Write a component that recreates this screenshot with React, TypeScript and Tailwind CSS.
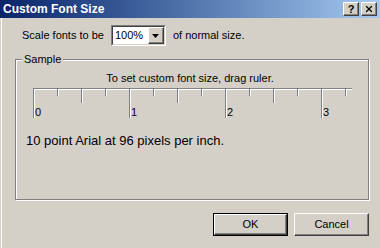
import { X } from 'lucide-react';

const raised = 'border border-t-white border-l-white border-r-[#404040] border-b-[#404040] shadow-[inset_-1px_-1px_0_#808080]';

const TitleButton = ({ children }: { children: React.ReactNode }) => (
    <div className={`w-[16px] h-[14px] bg-[#d4d0c8] flex items-center justify-center ${raised}`}>
        {children}
    </div>
);

const Ruler = () => {
    const majors = [17, 113, 209, 305];
    const halves = [65, 161, 257];
    const quarters = [41, 89, 137, 185, 233, 281, 329];
    const tick = (x: number, len: number) => (
        <g key={`${x}-${len}`}>
            <line x1={x + 0.5} y1={0} x2={x + 0.5} y2={len} stroke="#808080" />
            <line x1={x + 1.5} y1={2} x2={x + 1.5} y2={len} stroke="#ffffff" />
        </g>
    );
    return (
        <svg width="352" height="32" shapeRendering="crispEdges" className="block">
            <line x1={17} y1={0.5} x2={336} y2={0.5} stroke="#808080" />
            <line x1={18} y1={1.5} x2={336} y2={1.5} stroke="#ffffff" />
            {majors.map((x) => tick(x, 30))}
            {halves.map((x) => tick(x, 15))}
            {quarters.map((x) => tick(x, 8))}
            {majors.map((x, i) => (
                <text key={i} x={x + 2} y={28} fontSize="11" fontFamily="Liberation Sans, sans-serif" fill="#000">
                    {i}
                </text>
            ))}
        </svg>
    );
};

export default function App() {
    return (
        <div className="w-[380px] h-[248px] bg-[#d4d0c8] flex flex-col overflow-hidden text-black font-['Liberation_Sans',sans-serif] text-[11px] leading-[13px]">
            {/* Title bar */}
            <div className="h-[18px] shrink-0 flex items-center pl-[3px] pr-[3px] bg-gradient-to-r from-[#0a246a] to-[#a6caf0]">
                <span className="font-bold text-white text-[12px]">Custom Font Size</span>
                <div className="ml-auto flex">
                    <TitleButton>
                        <span className="font-bold text-[11px] leading-none">?</span>
                    </TitleButton>
                    <div className="ml-[2px]">
                        <TitleButton>
                            <X size={10} strokeWidth={3} />
                        </TitleButton>
                    </div>
                </div>
            </div>

            <div className="flex-1 flex flex-col border-l border-white ml-[1px] pl-[13px] pr-[11px]">
                {/* Scale row */}
                <div className="flex items-center mt-[7px] h-[21px] pl-[7px]">
                    <span>Scale fonts to be</span>
                    <div className="ml-[7px] w-[55px] h-[21px] bg-white flex border border-t-[#808080] border-l-[#808080] border-r-white border-b-white">
                        <div className="flex-1 flex border border-t-[#404040] border-l-[#404040] border-r-[#d4d0c8] border-b-[#d4d0c8]">
                            <span className="flex-1 pl-[2px] self-center">100%</span>
                            <div className={`w-[16px] bg-[#d4d0c8] flex items-center justify-center ${raised}`}>
                                <svg width="7" height="4" viewBox="0 0 7 4">
                                    <path d="M0 0h7L3.5 4z" fill="#000" />
                                </svg>
                            </div>
                        </div>
                    </div>
                    <span className="ml-[7px]">of normal size.</span>
                </div>

                {/* Sample group */}
                <div className="relative mt-[13px] h-[141px] border border-[#808080] shadow-[1px_1px_0_#fff,inset_1px_1px_0_#fff] flex flex-col">
                    <span className="absolute -top-[7px] left-[6px] bg-[#d4d0c8] px-[2px]">Sample</span>
                    <div className="mt-[12px] text-center pr-[4px]">To set custom font size, drag ruler.</div>
                    <div className="mt-[3px]">
                        <Ruler />
                    </div>
                    <div className="mt-[13px] pl-[10px] text-[13px] leading-[16px]">
                        10 point Arial at 96 pixels per inch.
                    </div>
                </div>

                {/* Buttons */}
                <div className="mt-[13px] flex justify-end gap-[6px]">
                    <div className="w-[75px] h-[23px] border border-black">
                        <div className={`h-full flex items-center justify-center ${raised}`}>OK</div>
                    </div>
                    <div className={`w-[75px] h-[23px] flex items-center justify-center ${raised}`}>Cancel</div>
                </div>
            </div>
        </div>
    );
}
